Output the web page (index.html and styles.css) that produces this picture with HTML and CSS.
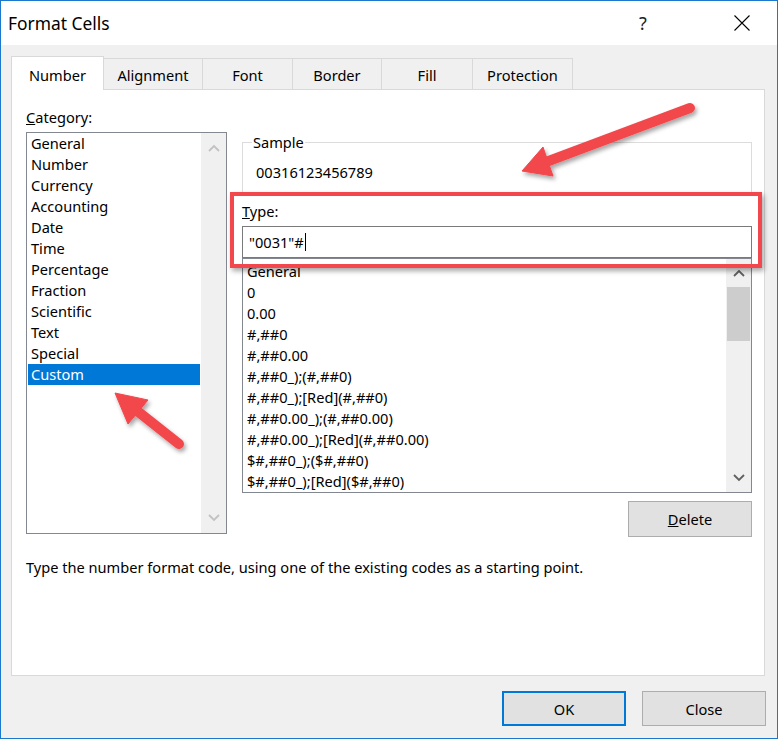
FILE: index.html
```html
<!DOCTYPE html>
<html lang="en">
<head>
<meta charset="utf-8">
<title>Format Cells</title>
<link rel="stylesheet" href="styles.css">
</head>
<body>
<div class="window">
  <header class="titlebar">
    <span class="title">Format Cells</span>
    <span class="help">?</span>
    <span class="close-x">
      <svg width="16" height="16" viewBox="0 0 16 16"><path d="M0.5 0.5 L15.5 15.5 M15.5 0.5 L0.5 15.5" stroke="#000" stroke-width="1.1" fill="none"/></svg>
    </span>
  </header>
  <main class="dialog">
    <nav class="tabs">
      <div class="tab active t-number">Number</div>
      <div class="tab t-align">Alignment</div>
      <div class="tab t-font">Font</div>
      <div class="tab t-border">Border</div>
      <div class="tab t-fill">Fill</div>
      <div class="tab t-prot">Protection</div>
    </nav>
    <section class="panel">
      <div class="columns">
        <div class="col-left">
          <div class="label"><u>C</u>ategory:</div>
          <div class="listbox cat">
            <ul class="items">
              <li>General</li>
              <li>Number</li>
              <li>Currency</li>
              <li>Accounting</li>
              <li>Date</li>
              <li>Time</li>
              <li>Percentage</li>
              <li>Fraction</li>
              <li>Scientific</li>
              <li>Text</li>
              <li>Special</li>
              <li class="selected">Custom</li>
            </ul>
            <div class="vscroll disabled">
              <span class="arrow up"><svg width="12" height="8" viewBox="0 0 12 8"><polyline points="1,7 6,2 11,7" fill="none" stroke-width="1.8"/></svg></span>
              <span class="track"></span>
              <span class="arrow down"><svg width="12" height="8" viewBox="0 0 12 8"><polyline points="1,1 6,6 11,1" fill="none" stroke-width="1.8"/></svg></span>
            </div>
          </div>
        </div>
        <div class="col-right">
          <fieldset class="sample">
            <legend>Sample</legend>
            <div class="sample-value">00316123456789</div>
          </fieldset>
          <div class="label type-label"><u>T</u>ype:</div>
          <div class="input">"0031"#<span class="caret"></span></div>
          <div class="listbox fmt">
            <ul class="items">
              <li>General</li>
              <li>0</li>
              <li>0.00</li>
              <li>#,##0</li>
              <li>#,##0.00</li>
              <li>#,##0_);(#,##0)</li>
              <li>#,##0_);[Red](#,##0)</li>
              <li>#,##0.00_);(#,##0.00)</li>
              <li>#,##0.00_);[Red](#,##0.00)</li>
              <li>$#,##0_);($#,##0)</li>
              <li>$#,##0_);[Red]($#,##0)</li>
            </ul>
            <div class="vscroll">
              <span class="arrow up"><svg width="12" height="8" viewBox="0 0 12 8"><polyline points="1,7 6,2 11,7" fill="none" stroke-width="1.8"/></svg></span>
              <span class="thumb"></span>
              <span class="track"></span>
              <span class="arrow down"><svg width="12" height="8" viewBox="0 0 12 8"><polyline points="1,1 6,6 11,1" fill="none" stroke-width="1.8"/></svg></span>
            </div>
          </div>
          <div class="delete-row"><button class="btn"><u>D</u>elete</button></div>
        </div>
      </div>
      <p class="hint">Type the number format code, using one of the existing codes as a starting point.</p>
    </section>
    <footer class="buttons">
      <button class="btn btn-ok">OK</button>
      <button class="btn">Close</button>
    </footer>
  </main>
</div>
<div class="highlight-box"></div>
<svg class="arrows" width="778" height="739" viewBox="0 0 778 739">
  <defs>
    <filter id="sh" x="-30%" y="-30%" width="160%" height="160%">
      <feDropShadow dx="2" dy="3" stdDeviation="2" flood-color="#000" flood-opacity="0.35"/>
    </filter>
  </defs>
  <g class="arrow-shape" filter="url(#sh)">
    <line x1="690" y1="108" x2="546" y2="162" stroke-width="10" stroke-linecap="round"/>
    <polygon points="522,171 543,147 553,176" stroke-width="1" stroke-linejoin="round"/>
  </g>
  <g class="arrow-shape" filter="url(#sh)">
    <line x1="179" y1="444" x2="136" y2="410" stroke-width="10" stroke-linecap="round"/>
    <polygon points="115,393 128,424 148,400" stroke-width="1" stroke-linejoin="round"/>
  </g>
</svg>
</body>
</html>
```
FILE: styles.css
```css
html, body {
  margin: 0;
  padding: 0;
}
body {
  width: 778px;
  height: 739px;
  position: relative;
  overflow: hidden;
  font-family: "Noto Sans", "Open Sans", sans-serif;
  font-size: 14.6px;
  color: #000;
  background: #fff;
}
.window {
  box-sizing: border-box;
  width: 778px;
  height: 739px;
  border: 1px solid #1b78cc;
  background: #f0f0f0;
  display: flex;
  flex-direction: column;
}
.titlebar {
  flex: none;
  height: 44px;
  background: #fff;
  display: flex;
  align-items: center;
}
.title {
  margin-left: 7px;
  font-size: 17.4px;
}
.help {
  margin-left: auto;
  width: 46px;
  text-align: center;
  font-size: 18px;
  color: #222;
  margin-right: 53px;
}
.close-x {
  width: 46px;
  margin-right: 12px;
  display: flex;
  justify-content: center;
}
.close-x svg { display: block; }

.dialog {
  flex: 1;
  padding: 11px 11px 0 10px;
  display: flex;
  flex-direction: column;
}
.tabs {
  display: flex;
  align-items: flex-end;
  height: 33px;
  position: relative;
  z-index: 1;
}
.tab {
  box-sizing: border-box;
  height: 31px;
  border-top: 1px solid #d9d9d9;
  border-right: 1px solid #d9d9d9;
  background: #f0f0f0;
  display: flex;
  align-items: center;
  justify-content: center;
  padding-top: 2px;
}
.tab.active {
  height: 34px;
  border-left: 1px solid #d9d9d9;
  background: #fff;
  margin-bottom: -1px;
  padding-top: 3px;
}
.t-number { width: 93px; }
.t-align { width: 99px; }
.t-font { width: 90px; }
.t-border { width: 89px; }
.t-fill { width: 91px; }
.t-prot { width: 100px; }

.panel {
  box-sizing: border-box;
  width: 754px;
  height: 587px;
  border: 1px solid #d9d9d9;
  background: #fff;
  padding: 17px 12px 0 14px;
}
.columns {
  display: flex;
  gap: 15px;
}
.col-left {
  width: 201px;
}
.label {
  height: 21px;
  line-height: 21px;
  margin-bottom: 4px;
}
.listbox {
  box-sizing: border-box;
  border: 1px solid #828790;
  background: #fff;
  display: flex;
  overflow: hidden;
}
.listbox.cat { height: 402px; }
.items {
  list-style: none;
  margin: 0;
  padding: 0 1px;
  flex: 1;
  min-width: 0;
  line-height: 21px;
  overflow: hidden;
}
.items li {
  height: 21px;
  padding-left: 3px;
  white-space: nowrap;
}
.items li.selected {
  background: #0078d7;
  color: #fff;
}
.vscroll {
  flex: none;
  width: 25px;
  background: #f0f0f0;
  display: flex;
  flex-direction: column;
}
.vscroll .arrow {
  flex: none;
  height: 28px;
  display: flex;
  align-items: center;
  justify-content: center;
}
.vscroll .arrow svg { display: block; stroke: #606060; }
.vscroll.disabled .arrow { height: 30px; }
.vscroll.disabled .arrow svg { stroke: #c2c2c2; }
.vscroll .track { flex: 1; }
.vscroll .thumb {
  flex: none;
  height: 54px;
  margin: 0 1px;
  background: #cdcdcd;
}

.col-right {
  width: 510px;
  display: flex;
  flex-direction: column;
}
.sample {
  margin: 25px 0 0;
  padding: 0 0 11px 9px;
  border: 1px solid #dcdcdc;
  min-width: 0;
}
.sample legend {
  padding: 0 1px;
  line-height: 21px;
}
.sample-value {
  margin: 9px 0 0 4px;
  line-height: 21px;
}
.type-label {
  margin-top: 6px;
  margin-bottom: 4px;
}
.input {
  box-sizing: border-box;
  height: 32px;
  border: 1px solid #7a7a7a;
  padding-left: 6px;
  display: flex;
  align-items: center;
  background: #fff;
}
.caret {
  width: 1px;
  height: 18px;
  background: #000;
  margin-left: 1px;
}
.listbox.fmt { height: 235px; }
.fmt .items { padding: 2px 0 0 4px; }
.fmt .items li { padding-left: 0; }

.delete-row {
  display: flex;
  justify-content: flex-end;
  margin-top: 8px;
}
.btn {
  box-sizing: border-box;
  width: 124px;
  height: 36px;
  padding: 0;
  background: #e1e1e1;
  border: 1px solid #adadad;
  font: inherit;
  color: #000;
}
.hint {
  margin: 20px 0 0;
  line-height: 21px;
}
.buttons {
  display: flex;
  justify-content: flex-end;
  gap: 16px;
  margin-top: 15px;
}
.buttons .btn { height: 35px; }
.btn-ok { border: 2px solid #0078d7; }

.highlight-box {
  position: absolute;
  left: 230px;
  top: 192px;
  width: 532px;
  height: 76px;
  box-sizing: border-box;
  border: 4px solid #f2474c;
  box-shadow: 2px 3px 5px rgba(0, 0, 0, 0.35);
}
.arrows {
  position: absolute;
  left: 0;
  top: 0;
  pointer-events: none;
}
.arrow-shape {
  fill: #f2474c;
  stroke: #f2474c;
}
```
